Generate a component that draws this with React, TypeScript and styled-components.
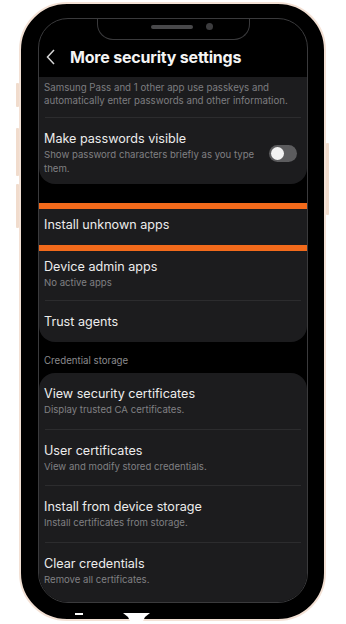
import { ReactElement } from 'react';
import styled, { createGlobalStyle } from 'styled-components';

const GlobalStyle = createGlobalStyle`
  html, body {
    margin: 0;
    padding: 0;
    background: #ffffff;
  }

  body {
    font-family: Inter, "Noto Sans", sans-serif;
    -webkit-font-smoothing: antialiased;
  }
`;

const Page = styled.div`
  display: flex;
  align-items: flex-start;

  width: 346px;
  height: 624px;
  padding: 2px 0 0 16px;
  box-sizing: border-box;
  overflow: hidden;
`;

const SideButtons = styled.div<{ $top: number }>`
  display: flex;
  flex-direction: column;

  width: 3px;
  margin-top: ${(p) => p.$top}px;
`;

const SideButton = styled.div<{ $h: number; $gap?: number }>`
  height: ${(p) => p.$h}px;
  margin-bottom: ${(p) => p.$gap ?? 0}px;

  background: #f1dccd;
  border-radius: 1px;
`;

const Phone = styled.div`
  display: flex;
  flex-direction: column;

  width: 307px;
  height: 619px;
  padding: 14px 16px 0 17px;
  box-sizing: border-box;

  background: #000;
  border: 2px solid #f3e1d5;
  border-radius: 48px;
`;

const Screen = styled.div`
  position: relative;

  height: 585px;
  box-sizing: border-box;
  overflow: hidden;

  background: #000;
  border: 1px solid #3a3a3c;
  border-radius: 30px;
`;

const Notch = styled.div`
  position: absolute;
  top: -1px;
  left: 58px;
  z-index: 2;

  display: flex;
  align-items: center;
  gap: 13px;

  width: 153px;
  height: 22px;
  padding: 0 0 0 53px;
  box-sizing: border-box;

  background: #000;
  border: 1px solid #3a3a3c;
  border-top: none;
  border-radius: 0 0 16px 16px;
`;

const Speaker = styled.div`
  width: 42px;
  height: 4px;
  margin-top: -4px;

  background: #48484a;
  border-radius: 2px;
`;

const Camera = styled.div`
  width: 7px;
  height: 7px;
  margin-top: -4px;

  background: #3c3c3e;
  border-radius: 50%;
`;

const Header = styled.div`
  display: flex;
  align-items: flex-end;
  gap: 15px;

  height: 58px;
  padding: 0 0 10px 7px;
  box-sizing: border-box;
`;

const BackIcon = styled.svg`
  display: block;
  margin-bottom: 2px;
`;

const Title = styled.div`
  color: #f4f4f4;
  font-size: 16px;
  font-weight: 700;
  line-height: 20px;
  letter-spacing: -0.2px;
`;

const Card = styled.div<{ $top?: number; $rounded?: boolean }>`
  margin-top: ${(p) => p.$top ?? 0}px;

  background: #1c1c1e;
  border-radius: ${(p) => (p.$rounded ? '16px' : '0 0 16px 16px')};
  overflow: hidden;
`;

const Note = styled.div`
  padding: 4px 8px 10px 5px;

  color: #7d7d80;
  font-size: 9.7px;
  line-height: 13px;
`;

const Divider = styled.div`
  height: 1px;
  margin: 0 6px;

  background: #2c2c2e;
`;

const Row = styled.div<{ $pt?: number; $pb?: number }>`
  display: flex;
  align-items: center;
  gap: 10px;

  padding: ${(p) => p.$pt ?? 12}px 10px ${(p) => p.$pb ?? 12}px 5px;
`;

const RowText = styled.div`
  flex: 1;
  min-width: 0;
`;

const RowTitle = styled.div`
  color: #ececec;
  font-size: 12.6px;
  line-height: 17px;
`;

const RowSub = styled.div`
  margin-top: 1px;

  color: #808083;
  font-size: 9.6px;
  line-height: 14px;
`;

const Highlight = styled.div`
  border-top: 6px solid #f26a1b;
  border-bottom: 6px solid #f26a1b;
`;

const SingleRow = styled.div`
  display: flex;
  align-items: center;

  height: 36px;
  padding: 0 5px 5px;
  box-sizing: border-box;
`;

const Toggle = styled.div`
  display: flex;
  align-items: center;

  width: 28px;
  height: 17px;
  padding: 0 2px;
  box-sizing: border-box;

  background: #5c5c5e;
  border-radius: 9px;
`;

const Knob = styled.div`
  width: 13px;
  height: 13px;

  background: #f2f2f2;
  border-radius: 50%;
`;

const SectionLabel = styled.div`
  padding: 12px 5px 5px;

  color: #8a8a8d;
  font-size: 9.7px;
  line-height: 14px;
`;

const Bezel = styled.div`
  display: flex;
  align-items: flex-end;

  flex: 1;
  padding-left: 37px;
`;

const Dash = styled.div`
  width: 8px;
  height: 2px;
  margin-bottom: 4px;

  background: #ffffff;
`;

const Cut = styled.svg`
  display: block;
  margin: 0 0 -2px 40px;
`;

interface Setting {
  title: string;
  sub?: string;
}

const credentials: Setting[] = [
  { title: 'View security certificates', sub: 'Display trusted CA certificates.' },
  { title: 'User certificates', sub: 'View and modify stored credentials.' },
  { title: 'Install from device storage', sub: 'Install certificates from storage.' },
  { title: 'Clear credentials', sub: 'Remove all certificates.' },
];

/**
 * More security settings screen inside a phone frame
 */
export default function App(): ReactElement {
  return (
    <>
      <GlobalStyle/>
      <Page>
        <SideButtons $top={81}>
          <SideButton $h={24} $gap={21}/>
          <SideButton $h={48} $gap={8}/>
          <SideButton $h={44}/>
        </SideButtons>

        <Phone>
          <Screen>
            <Notch>
              <Speaker/>
              <Camera/>
            </Notch>

            <Header>
              <BackIcon width="9" height="16" viewBox="0 0 9 16">
                <polyline points="8,1 1.5,8 8,15" fill="none" stroke="#d4d4d4" strokeWidth="1.5"/>
              </BackIcon>
              <Title>More security settings</Title>
            </Header>

            <Card>
              <Note>
                Samsung Pass and 1 other app use passkeys and
                automatically enter passwords and other information.
              </Note>
              <Divider/>
              <Row $pt={12} $pb={8}>
                <RowText>
                  <RowTitle>Make passwords visible</RowTitle>
                  <RowSub>Show password characters briefly as you type them.</RowSub>
                </RowText>
                <Toggle>
                  <Knob/>
                </Toggle>
              </Row>
            </Card>

            <Card $top={19}>
              <Highlight>
                <SingleRow>
                  <RowTitle>Install unknown apps</RowTitle>
                </SingleRow>
              </Highlight>
              <Row $pt={7} $pb={10}>
                <RowText>
                  <RowTitle>Device admin apps</RowTitle>
                  <RowSub>No active apps</RowSub>
                </RowText>
              </Row>
              <Divider/>
              <Row $pt={12} $pb={12}>
                <RowText>
                  <RowTitle>Trust agents</RowTitle>
                </RowText>
              </Row>
            </Card>

            <SectionLabel>Credential storage</SectionLabel>

            <Card $rounded>
              {credentials.map((item, i) => (
                <div key={item.title}>
                  {i > 0 && <Divider/>}
                  <Row $pb={11.5}>
                    <RowText>
                      <RowTitle>{item.title}</RowTitle>
                      {item.sub && <RowSub>{item.sub}</RowSub>}
                    </RowText>
                  </Row>
                </div>
              ))}
              <Row $pt={10} $pb={10}/>
            </Card>
          </Screen>

          <Bezel>
            <Dash/>
            <Cut width="27" height="8" viewBox="0 0 27 8">
              <polygon points="0,0 27,0 22,4 20,8 7,8 5,4" fill="#ffffff"/>
            </Cut>
          </Bezel>
        </Phone>

        <SideButtons $top={141}>
          <SideButton $h={72}/>
        </SideButtons>
      </Page>
    </>
  );
}
